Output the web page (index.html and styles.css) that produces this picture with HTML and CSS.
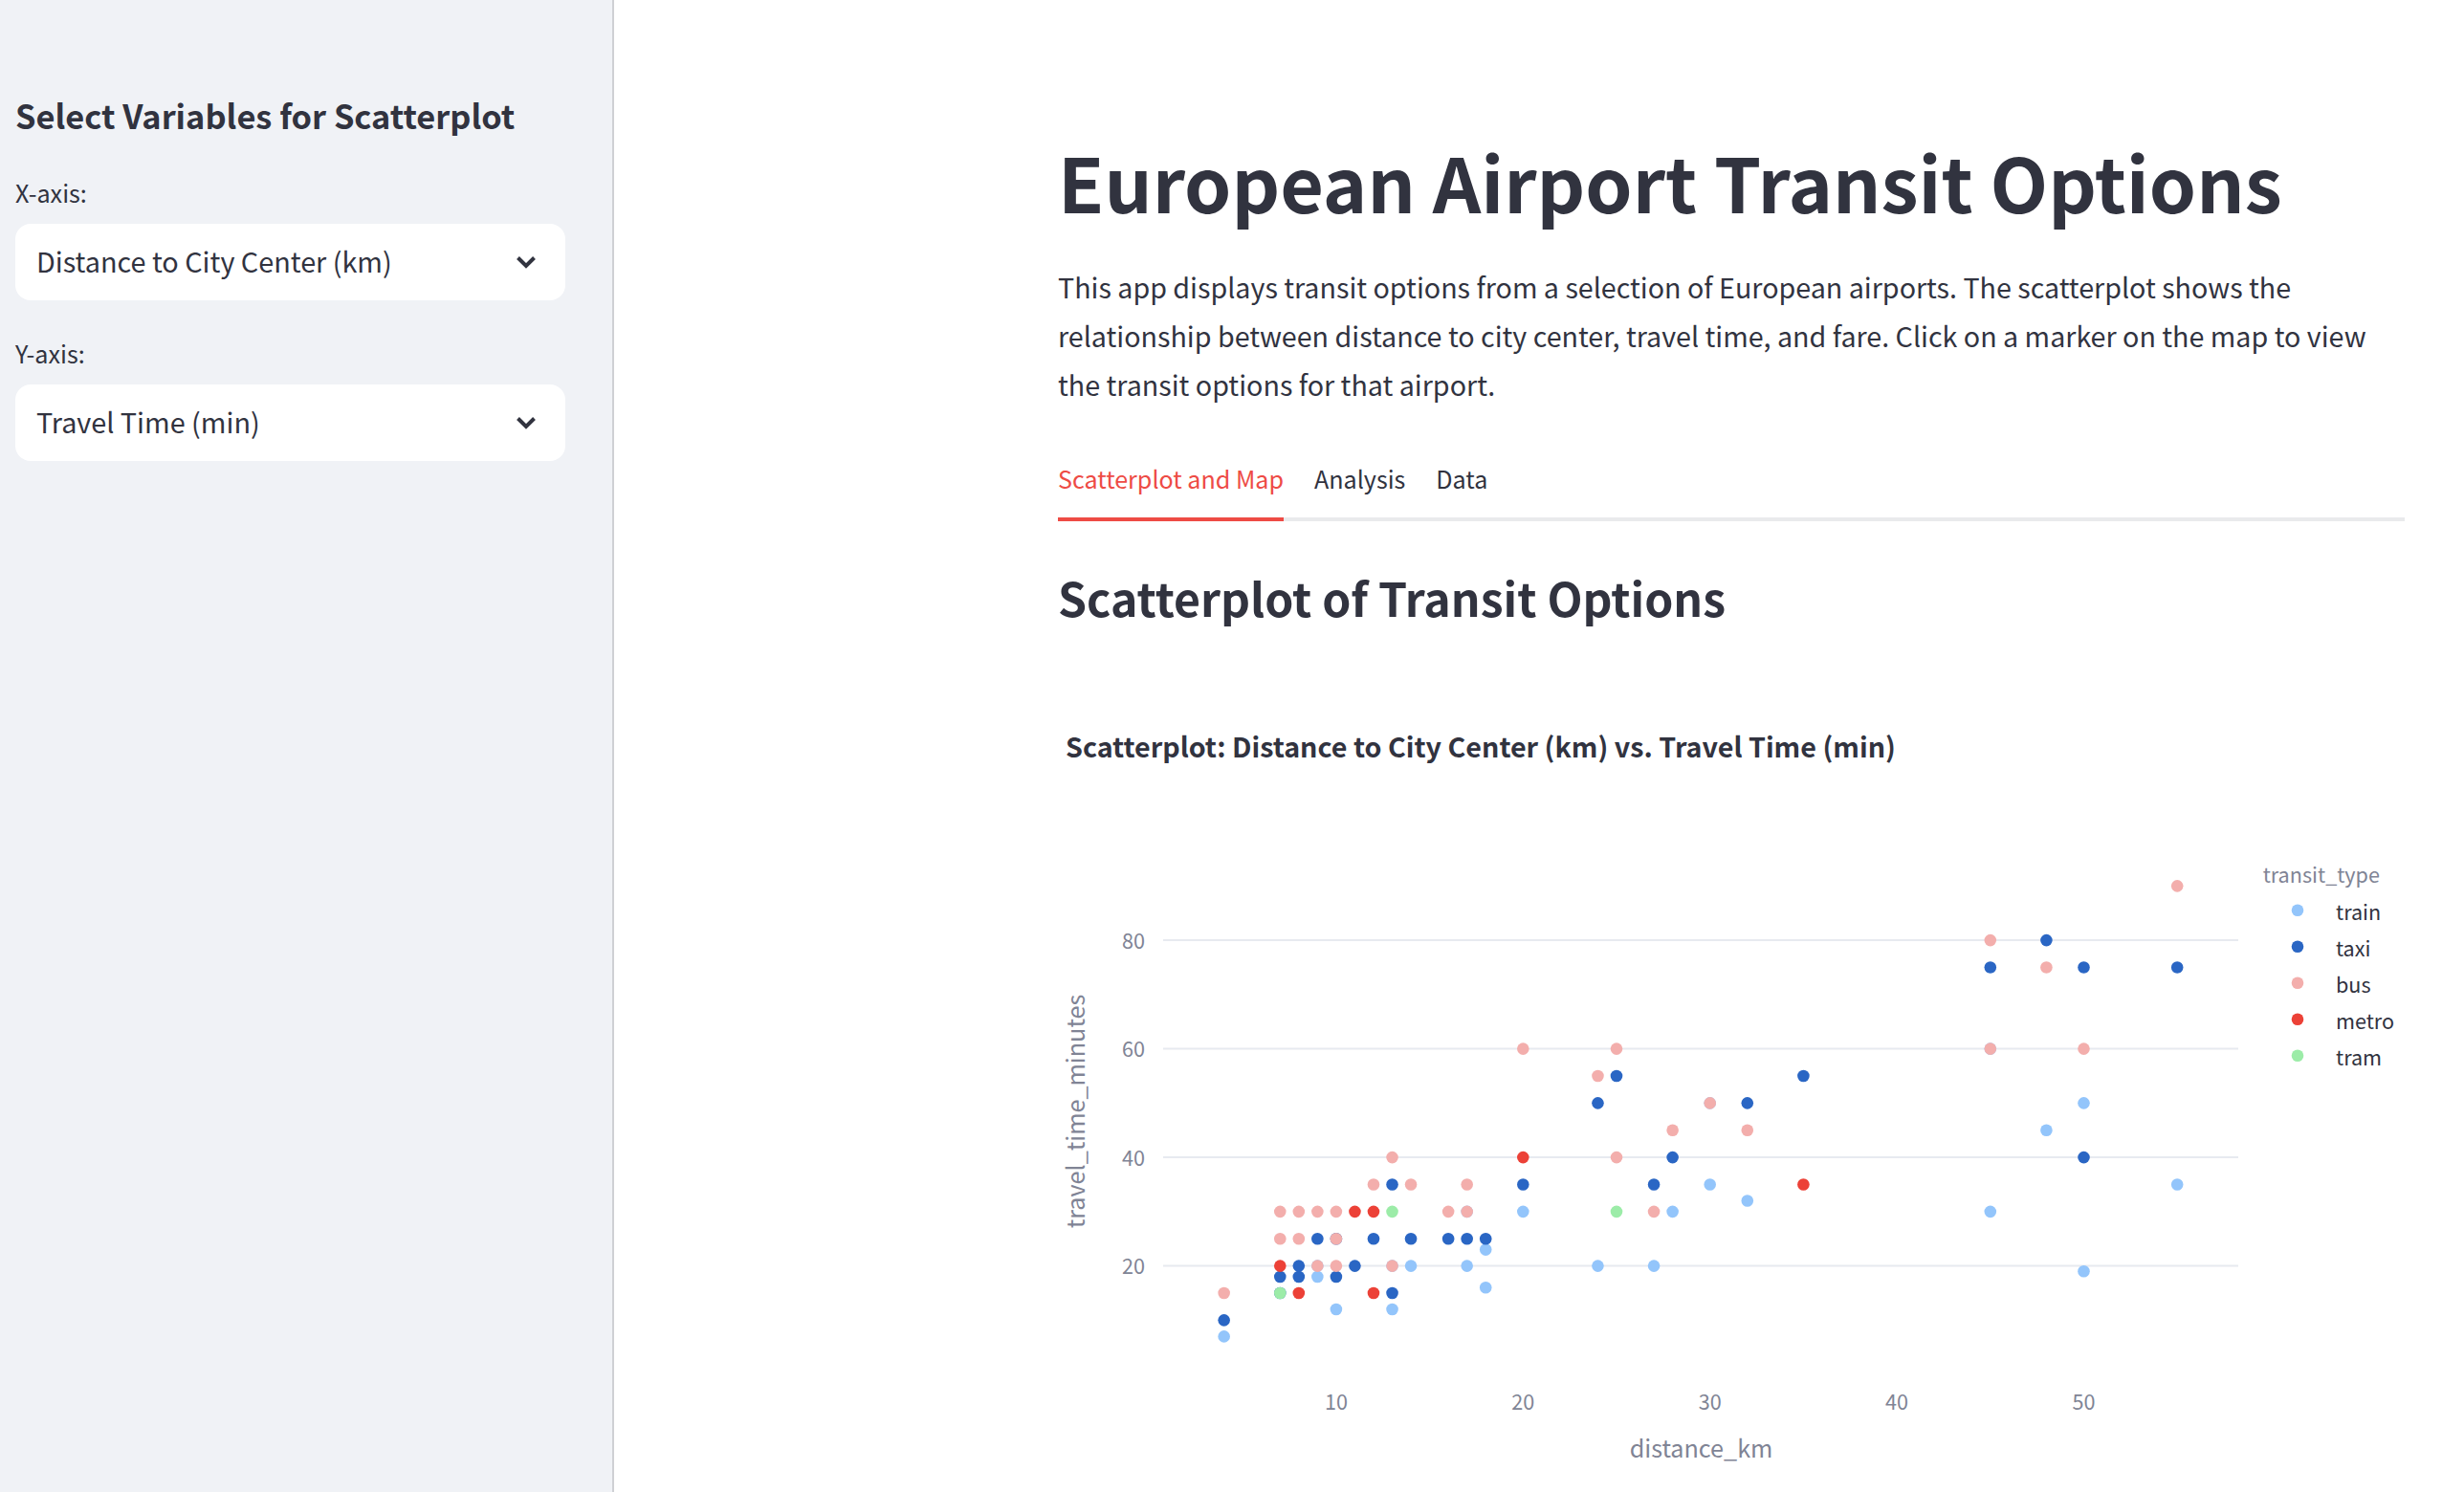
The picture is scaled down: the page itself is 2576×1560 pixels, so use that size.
FILE: index.html
```html
<!DOCTYPE html>
<html lang="en">
<head>
  <meta charset="UTF-8" />
  <title>European Airport Transit Options</title>
  <link rel="stylesheet" href="styles.css">
</head>
<body>

<aside class="sidebar">
  <h3>Select Variables for Scatterplot</h3>

  <label class="field-label">X-axis:</label>
  <div class="select-box">
    <span>Distance to City Center (km)</span>
    <svg class="chevron" viewBox="0 0 22 14"><path d="M2.5 2.5 L11 11 L19.5 2.5"/></svg>
  </div>

  <label class="field-label">Y-axis:</label>
  <div class="select-box">
    <span>Travel Time (min)</span>
    <svg class="chevron" viewBox="0 0 22 14"><path d="M2.5 2.5 L11 11 L19.5 2.5"/></svg>
  </div>
</aside>

<main class="main">
  <h1>European Airport Transit Options</h1>
  <p class="intro">This app displays transit options from a selection of European airports. The scatterplot shows the relationship between distance to city center, travel time, and fare. Click on a marker on the map to view the transit options for that airport.</p>

  <div class="tabs">
    <span class="tab active">Scatterplot and Map</span>
    <span class="tab">Analysis</span>
    <span class="tab">Data</span>
  </div>

  <h2>Scatterplot of Transit Options</h2>

  <div class="chart-title">Scatterplot: Distance to City Center (km) vs. Travel Time (min)</div>

  <!-- grid and dots get filled in by chart.js -->
  <svg id="chart" class="chart" width="1408" height="740">
    <g id="grid"></g>
    <g id="dots"></g>
    <g class="tick">
      <text x="91" y="171.5" text-anchor="end">80</text>
      <text x="91" y="285" text-anchor="end">60</text>
      <text x="91" y="398.5" text-anchor="end">40</text>
      <text x="91" y="512" text-anchor="end">20</text>
      <text x="291" y="654" text-anchor="middle">10</text>
      <text x="486.3" y="654" text-anchor="middle">20</text>
      <text x="681.7" y="654" text-anchor="middle">30</text>
      <text x="877.1" y="654" text-anchor="middle">40</text>
      <text x="1072.5" y="654" text-anchor="middle">50</text>
    </g>
    <text class="axis-title" x="672.5" y="704" text-anchor="middle">distance_km</text>
    <text class="axis-title" transform="translate(28 342) rotate(-90)" text-anchor="middle">travel_time_minutes</text>

    <text class="legend-title" x="1259.7" y="103">transit_type</text>
    <g id="legend" class="legend-label"></g>
  </svg>
</main>

<script src="chart.js"></script>
</body>
</html>
```

FILE: styles.css
```css
* {
  box-sizing: border-box;
}

html, body {
  height: 100%;
}

body {
  margin: 0;
  display: flex;
  overflow: hidden;
  font-family: "Noto Sans CJK SC", "Noto Sans", sans-serif;
  color: #31333f;
  background-color: #ffffff;
}

.sidebar {
  flex: 0 0 642px;
  height: 100%;
  padding: 91px 49px 0 16px;
  background-color: #f0f2f6;
  border-right: 2px solid #cfd0d4;
}

.sidebar h3 {
  margin: 0 0 31px;
  font-size: 34.4px;
  line-height: 58px;
  font-weight: 600;
}

.field-label {
  display: block;
  margin-bottom: 12px;
  font-size: 25.2px;
  line-height: 42px;
}

.select-box {
  display: flex;
  justify-content: space-between;
  align-items: center;
  height: 80px;
  margin-bottom: 34px;
  padding: 0 30px 3px 22px;
  font-size: 28.8px;
  background-color: #ffffff;
  border-radius: 16px;
}

.chevron {
  width: 22px;
  height: 14px;
  margin-top: 2px;
}

.chevron path {
  fill: none;
  stroke: #31333f;
  stroke-width: 4;
}

.main {
  flex: 1;
  min-width: 0;
  padding: 129px 62px 0 464px;
}

h1 {
  margin: 0 0 25px;
  font-size: 78.8px;
  line-height: 120px;
  font-weight: 700;
}

.intro {
  margin: 0 0 42px;
  font-size: 28.66px;
  line-height: 51px;
}

.tabs {
  display: flex;
  gap: 32px;
  height: 76px;
  border-bottom: 4px solid #e9eaec;
}

.tab {
  height: 76px;
  font-size: 25.1px;
  line-height: 62px;
}

.tab.active {
  color: #ee4b45;
  border-bottom: 4px solid #ee4b45;
}

h2 {
  margin: 39px 0 0;
  font-size: 48.2px;
  line-height: 80px;
  font-weight: 600;
}

.chart-title {
  margin-top: 92px;
  padding-left: 8px;
  font-size: 28.7px;
  line-height: 48px;
  font-weight: 700;
}

.chart {
  display: block;
  margin-top: 16px;
}

.grid-line {
  stroke: #e7eaf0;
  stroke-width: 2;
}

.tick text {
  font-size: 21.6px;
  fill: #808495;
}

.axis-title {
  font-size: 25.2px;
  fill: #808495;
}

.legend-title {
  font-size: 21.6px;
  fill: #808495;
}

.legend-label text {
  font-size: 21.6px;
  fill: #31333f;
}

.train { fill: #93c5fb; }
.taxi { fill: #2a66c4; }
.bus { fill: #f3aeac; }
.metro { fill: #ec4137; }
.tram { fill: #9ceca8; }
```

FILE: chart.js
```js
const SVG_NS = 'http://www.w3.org/2000/svg';

// [distance_km, travel_time_minutes]
const points = {
  train: [[4,7],[9,18],[10,12],[13,12],[9,20],[13,20],[14,20],[17,20],[18,16],[18,23],[17,30],[20,30],
    [24,20],[27,20],[28,30],[30,35],[32,32],[30,50],[45,30],[45,60],[48,45],[50,50],[50,19],[55,35]],
  taxi: [[4,10],[7,18],[8,18],[8,20],[10,18],[11,20],[13,15],[7,15],[9,25],[10,25],[12,25],[14,25],[16,25],
    [17,25],[18,25],[13,35],[20,35],[24,50],[25,55],[27,35],[28,40],[32,50],[35,55],[45,75],[48,80],
    [50,75],[50,40],[55,75]],
  bus: [[4,15],[7,25],[8,25],[7,30],[8,30],[9,30],[10,30],[9,20],[10,20],[10,25],[13,20],[12,35],[13,40],
    [14,35],[16,30],[17,30],[17,35],[20,60],[24,55],[25,60],[25,40],[27,30],[28,45],[30,50],[32,45],
    [45,60],[45,80],[48,75],[50,60],[55,90]],
  metro: [[7,20],[8,15],[11,30],[12,30],[12,15],[20,40],[35,35]],
  tram: [[7,15],[13,30],[25,30]]
};

function xPos(v) { return 486.3 + (v - 20) * 19.54; }
function yPos(v) { return 503.6 - (v - 20) * 5.675; }

function addEl(parent, tag, attrs) {
  const el = document.createElementNS(SVG_NS, tag);
  for (const key in attrs) el.setAttribute(key, attrs[key]);
  parent.appendChild(el);
  return el;
}

const grid = document.getElementById('grid');
[20, 40, 60, 80].forEach(function(v) {
  addEl(grid, 'line', { class: 'grid-line', x1: 110, x2: 1234, y1: yPos(v), y2: yPos(v) });
});

const dots = document.getElementById('dots');
const legend = document.getElementById('legend');
Object.keys(points).forEach(function(type, i) {
  points[type].forEach(function(p) {
    addEl(dots, 'circle', { class: type, cx: xPos(p[0]), cy: yPos(p[1]), r: 6.3 });
  });
  addEl(legend, 'circle', { class: type, cx: 1296, cy: 131.7 + i * 38, r: 6.3 });
  const label = addEl(legend, 'text', { x: 1336, y: 141.7 + i * 38 });
  label.textContent = type;
});
```
